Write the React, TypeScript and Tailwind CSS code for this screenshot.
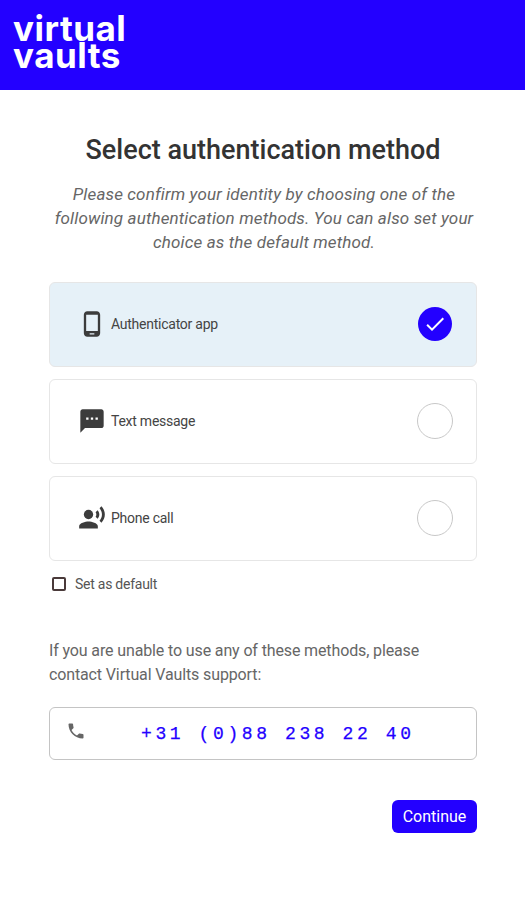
import React from 'react'
import { MdCheck, MdOutlinePhoneAndroid, MdPhone, MdRecordVoiceOver, MdSms } from 'react-icons/md'

const methods = [
  { id: 'app', label: 'Authenticator app', icon: MdOutlinePhoneAndroid, active: true },
  { id: 'sms', label: 'Text message', icon: MdSms, active: false },
  { id: 'call', label: 'Phone call', icon: MdRecordVoiceOver, active: false },
]

export default function App() {
  return (
    <div className="w-[525px] h-[906px] bg-white font-['Roboto',sans-serif] overflow-hidden">
      {/* Header */}
      <header className="h-[90px] bg-[#2300ff] pl-[13px] pt-[15px]">
        <div className="font-['Inter',sans-serif] font-bold text-white text-[35px] leading-[27px] tracking-[0.5px]">
          <div>virtual</div>
          <div>vaults</div>
        </div>
      </header>

      <main className="pl-[49px] pr-[48px]">
        <h1 className="mt-[42px] text-center text-[27px] leading-[36px] font-medium text-[#333333]">
          Select authentication method
        </h1>
        <p className="mt-[14px] pl-[2px] text-center text-[17px] tracking-[0.14px] leading-[24px] italic text-[#666666]">
          Please confirm your identity by choosing one of the following authentication methods. You can also set your
          choice as the default method.
        </p>

        {/* Methods */}
        <div className="mt-[28px] flex flex-col gap-3">
          {methods.map((method) => {
            const Icon = method.icon
            return (
              <div
                key={method.id}
                className={`h-[85px] flex items-center rounded-md border border-[#e6e6e6] pl-[28px] pr-[23px] pb-[2px] ${
                  method.active ? 'bg-[#e6f1f8]' : 'bg-white'
                }`}
              >
                <Icon className="w-7 h-7 text-[#3c3c3c] shrink-0" />
                <span className="ml-[5px] text-sm tracking-[-0.25px] text-[#444444]">{method.label}</span>
                <div className="ml-auto w-9 h-9 flex items-center justify-center">
                  {method.active ? (
                    <div className="w-[34px] h-[34px] rounded-full bg-[#2300ff] flex items-center justify-center">
                      <MdCheck className="w-6 h-6 text-white" />
                    </div>
                  ) : (
                    <div className="w-9 h-9 rounded-full border border-[#c8c8c8]" />
                  )}
                </div>
              </div>
            )
          })}
        </div>

        <label className="mt-[14px] ml-[3px] flex items-center h-[18px]">
          <span className="w-[14px] h-[14px] rounded-[2px] border-2 border-[#4a3a3a]" />
          <span className="ml-[9px] text-sm tracking-[-0.25px] text-[#555555]">Set as default</span>
        </label>

        <p className="mt-[46px] mr-[40px] text-base tracking-[-0.13px] leading-[24px] text-[#666666]">
          If you are unable to use any of these methods, please contact Virtual Vaults support:
        </p>

        {/* Support number */}
        <div className="mt-[20px] h-[53px] flex items-center rounded-md border border-[#c4c4c4] pl-[16px]">
          <MdPhone className="w-5 h-5 text-[#666666] -mt-[6px] shrink-0" />
          <span className="ml-[55px] font-['Liberation_Mono',monospace] text-lg [-webkit-text-stroke:0.25px_#2300ff] text-[#2300ff] tracking-[3.6px] whitespace-pre">
            +31 (0)88 238 22 40
          </span>
        </div>

        <div className="mt-[40px] flex justify-end">
          <button className="h-[33px] w-[85px] rounded-md bg-[#2300ff] text-white text-base">Continue</button>
        </div>
      </main>
    </div>
  )
}
